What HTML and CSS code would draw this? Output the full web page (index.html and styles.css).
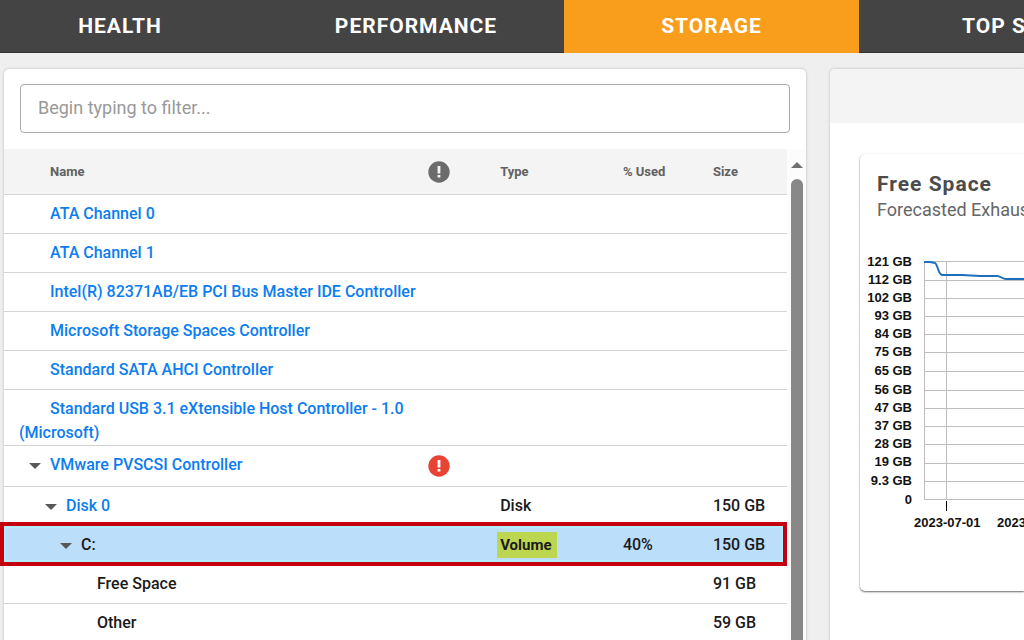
FILE: index.html
```html
<!DOCTYPE html>
<html lang="en">
<head>
<meta charset="utf-8">
<title>Storage</title>
<link rel="stylesheet" href="styles.css">
</head>
<body>
<nav class="tabs">
  <a class="tab tab-first" href="#health">HEALTH</a>
  <a class="tab" href="#performance">PERFORMANCE</a>
  <a class="tab active" href="#storage" aria-current="page">STORAGE</a>
  <a class="tab tab-last" href="#top">TOP S</a>
</nav>
<main class="layout">
  <section class="panel">
    <div class="filter"><input class="filter-input" type="text" placeholder="Begin typing to filter..." aria-label="Filter"></div>
    <div class="table-area">
      <table class="tree">
        <colgroup><col class="col-name"><col class="col-status"><col class="col-type"><col class="col-used"><col class="col-size"></colgroup>
        <thead>
          <tr>
            <th><span class="indent"></span>Name</th>
            <th class="status"><svg class="alert" viewBox="0 0 22 22" role="img" aria-label="Status"><circle cx="11" cy="11" r="10.7" fill="#6c6c6c"/><path d="M9.6 5h2.8v7.6H9.6zM9.6 14h2.8v2.6H9.6z" fill="#f4f4f4"/></svg></th>
            <th class="type">Type</th><th>% Used</th><th>Size</th>
          </tr>
        </thead>
        <tbody>
          <tr><td><span class="indent"></span><a href="#a0">ATA Channel 0</a></td><td></td><td></td><td></td><td></td></tr>
          <tr><td><span class="indent"></span><a href="#a1">ATA Channel 1</a></td><td></td><td></td><td></td><td></td></tr>
          <tr><td><span class="indent"></span><a href="#ide">Intel(R) 82371AB/EB PCI Bus Master IDE Controller</a></td><td></td><td></td><td></td><td></td></tr>
          <tr><td><span class="indent"></span><a href="#spaces">Microsoft Storage Spaces Controller</a></td><td></td><td></td><td></td><td></td></tr>
          <tr><td><span class="indent"></span><a href="#sata">Standard SATA AHCI Controller</a></td><td></td><td></td><td></td><td></td></tr>
          <tr><td><span class="indent"></span><a href="#usb">Standard USB 3.1 eXtensible Host Controller - 1.0 (Microsoft)</a></td><td></td><td></td><td></td><td></td></tr>
          <tr class="tall"><td><button class="toggle" aria-label="Collapse VMware PVSCSI Controller"></button><a href="#vm">VMware PVSCSI Controller</a></td><td class="status"><svg class="alert" viewBox="0 0 22 22" role="img" aria-label="Alert"><circle cx="11" cy="11" r="10.7" fill="#e94335"/><path d="M9.6 5h2.8v7.6H9.6zM9.6 14h2.8v2.6H9.6z" fill="#fff"/></svg></td><td></td><td></td><td></td></tr>
          <tr><td class="level-1"><button class="toggle" aria-label="Collapse Disk 0"></button><a href="#disk">Disk 0</a></td><td></td><td class="type">Disk</td><td></td><td>150 GB</td></tr>
          <tr class="selected"><td class="level-2"><button class="toggle" aria-label="Collapse C:"></button>C:</td><td></td><td class="type"><mark class="match">Volume</mark></td><td>40%</td><td>150 GB</td></tr>
          <tr><td class="level-3"><span class="indent"></span>Free Space</td><td></td><td></td><td></td><td>91 GB</td></tr>
          <tr><td class="level-3"><span class="indent"></span>Other</td><td></td><td></td><td></td><td>59 GB</td></tr>
        </tbody>
      </table>
      <div class="scrollbar"><div class="scroll-arrow"></div><div class="scroll-thumb"></div></div>
    </div>
  </section>
  <section class="panel details">
    <div class="details-head"></div>
    <article class="card">
      <h2 class="card-title">Free Space</h2>
      <p class="card-subtitle">Forecasted Exhaus</p>
      <svg class="chart" width="100%" height="300" role="img" aria-label="Free space over time">
        <g class="grid">
          <path d="M64 20.5H400M64 39.5H400M64 57.5H400M64 75.5H400M64 93.5H400M64 111.5H400M64 130.5H400M64 149.5H400M64 167.5H400M64 185.5H400M64 203.5H400M64 222.5H400M64 240.5H400M64 258.5H400M64.5 20V259M86.5 20V259"/>
        </g>
        <path class="tick" d="M86.5 260v10"/>
        <path class="series" d="M64 21h6l5 1c3 2 3 11 7 12h20l18 1h17c4 0 5 3 9 3h60"/>
        <g class="y-labels">
          <text x="52" y="25">121 GB</text><text x="52" y="43">112 GB</text><text x="52" y="61">102 GB</text><text x="52" y="79">93 GB</text><text x="52" y="97">84 GB</text><text x="52" y="115">75 GB</text><text x="52" y="134">65 GB</text><text x="52" y="153">56 GB</text><text x="52" y="171">47 GB</text><text x="52" y="189">37 GB</text><text x="52" y="207">28 GB</text><text x="52" y="225">19 GB</text><text x="52" y="244">9.3 GB</text><text x="52" y="263">0</text>
        </g>
        <text x="54" y="286">2023-07-01</text><text x="137" y="286">2023</text>
      </svg>
    </article>
  </section>
</main>
</body>
</html>
```
FILE: styles.css
```css
* { box-sizing: border-box; }
body {
  margin: 0;
  height: 100vh;
  overflow: hidden;
  display: flex;
  flex-direction: column;
  background: #efefef;
  color: #1a1a1a;
  font-family: Roboto, "Liberation Sans", sans-serif;
}
.tabs {
  display: grid;
  grid-template-columns: 268fr 296fr 295fr 165fr;
  flex: none;
  height: 53px;
  background: #444;
  border-bottom: 1px solid #333;
}
.tab {
  min-width: 0;
  height: 53px;
  color: #fff;
  font-size: 21px;
  font-weight: 700;
  line-height: 52px;
  letter-spacing: 1px;
  text-align: center;
  text-decoration: none;
  white-space: nowrap;
}
.tab-first { padding-right: 28px; }
.tab-last { padding-left: 103px; text-align: left; }
.tab.active { background: #f99d1c; }
.layout {
  flex: 1;
  min-height: 0;
  display: grid;
  grid-template-columns: 802fr 194fr;
  gap: 24px;
  padding: 16px 0 0 4px;
}
.panel {
  min-width: 0;
  display: flex;
  flex-direction: column;
  background: #fff;
  border-radius: 5px 5px 0 0;
  box-shadow: 0 0 3px rgba(0, 0, 0, .24);
}
.filter { padding: 15px 16px 16px; }
.filter-input {
  display: block;
  width: 100%;
  height: 49px;
  padding: 0 17px 2px;
  border: 1px solid #aaa;
  border-radius: 4px;
  background: #fff;
  color: #333;
  font: 400 18px Roboto, sans-serif;
}
.filter-input::placeholder { color: #999; opacity: 1; }
.table-area { flex: 1; display: flex; align-items: stretch; min-height: 0; }
.tree {
  flex: 1;
  align-self: flex-start;
  table-layout: fixed;
  border-collapse: separate;
  border-spacing: 0;
  font-size: 16px;
  font-weight: 500;
  line-height: 24px;
}
.col-name { width: 53%; }
.col-status { width: 5%; }
.col-type { width: 19%; }
.col-used { width: 11.5%; }
.col-size { width: 11.5%; }
th {
  height: 46px;
  padding: 0 0 0 16px;
  background: #f4f4f4;
  border-bottom: 1px solid #d4d4d4;
  color: #616161;
  font-size: 13px;
  font-weight: 700;
  text-align: left;
}
td {
  height: 39px;
  padding: 7px 0 0 16px;
  border-bottom: 1px solid #d4d4d4;
  vertical-align: top;
}
th:first-child, td:first-child { padding-left: 15px; }
.tall td { height: 41px; }
td a { color: #0b7df0; text-decoration: none; }
td.level-1 { padding-left: 31px; }
td.level-2 { padding-left: 46px; }
td.level-3 { padding-left: 62px; }
.type { padding-left: 42px; }
th.status, td.status { padding-left: 0; text-align: center; }
td.status { padding-top: 9px; }
.alert { display: block; width: 22px; height: 22px; margin: 0 auto; }
.indent { display: inline-block; width: 31px; }
.toggle {
  display: inline-flex;
  justify-content: center;
  align-items: center;
  width: 31px;
  height: 16px;
  padding: 0;
  border: 0;
  background: none;
  vertical-align: middle;
}
.toggle::before {
  content: "";
  border: 6px solid transparent;
  border-top-color: #585858;
  border-bottom: 0;
}
.selected { position: relative; }
.selected td { background: #bbdefb; }
.selected::after {
  content: "";
  position: absolute;
  inset: -4px 0 -1px -4px;
  border: 4px solid #c4000f;
  box-shadow: inset 0 0 0 2px #b4ecff;
  pointer-events: none;
}
.match {
  margin-left: -3px;
  padding: 4px 5px 4px 3px;
  background: #bdd650;
  color: inherit;
  font-size: 15px;
  font-weight: 700;
}
.scrollbar {
  flex: none;
  width: 19px;
  display: flex;
  flex-direction: column;
  align-items: center;
  gap: 11px;
  padding-top: 13px;
  background: #fcfcfc;
}
.scroll-arrow { border: 6px solid transparent; border-top: 0; border-bottom-color: #707070; }
.scroll-thumb { flex: 1; width: 12px; border-radius: 6px 6px 0 0; background: #888; }
.details { overflow: hidden; border-top-right-radius: 0; }
.details-head { flex: none; height: 54px; background: #f4f4f4; }
.card {
  margin: 31px 0 0 30px;
  height: 437px;
  padding-top: 18px;
  border-radius: 5px 0 0 5px;
  box-shadow: 0 1px 2px rgba(0, 0, 0, .6);
  overflow: hidden;
}
.card-title {
  margin: 0 0 0 17px;
  color: #4c4c4c;
  font-size: 21px;
  font-weight: 700;
  line-height: 24px;
  letter-spacing: 1px;
  white-space: nowrap;
}
.card-subtitle {
  margin: 1px 0 0 17px;
  color: #666;
  font-size: 18px;
  font-weight: 400;
  line-height: 26px;
  white-space: nowrap;
}
.chart {
  display: block;
  margin-top: 18px;
  font: 700 13px "Liberation Sans", sans-serif;
  fill: #111;
}
.grid { stroke: #bdbdbd; stroke-width: 1; fill: none; }
.tick { stroke: #000; stroke-width: 1; }
.series { stroke: #1c6fb8; stroke-width: 2; fill: none; }
.y-labels { text-anchor: end; }
```
